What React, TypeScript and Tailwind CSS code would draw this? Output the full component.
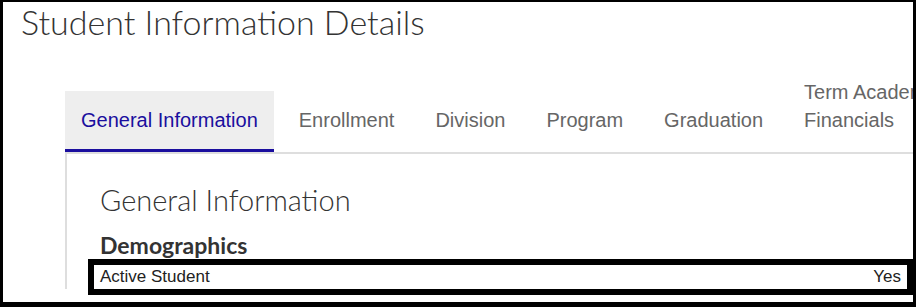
const TABS = ["General Information", "Enrollment", "Division", "Program", "Graduation", "Term Academic Financials"];

export default function App() {
  return (
    <div className="w-[916px] h-[307px] bg-white border-l-[3px] border-t-[2px] border-r-[3px] border-b-[5px] border-black overflow-hidden flex flex-col">
      <h1 className="h-[60px] pl-[18px] font-['Lato','Open_Sans',sans-serif] text-[34px] leading-[40px] font-light text-[#333]">
        Student Information Details
      </h1>

      {/* tabs */}
      <div className="ml-[62px] h-[92px] flex items-end gap-[9px] border-b-2 border-[#dedede] font-['Liberation_Sans',Arial,sans-serif] text-[20px] leading-[28px]">
        {TABS.map((t, i) => (
          <div
            key={t}
            className={`shrink-0 px-[16px] py-[15px] border-b-[3px] ${
              i === 0 ? "bg-[#eeeeee] text-[#1a0e9e] border-[#1a0e9e]" : "text-[#666] border-transparent"
            } ${i === TABS.length - 1 ? "w-[180px]" : ""}`}
          >
            {t}
          </div>
        ))}
      </div>

      <div className="ml-[62px] h-[135px] border-l-2 border-[#dedede] flex flex-col">
        <h2 className="pl-[33px] pt-[30px] font-['Lato','Open_Sans',sans-serif] text-[29px] leading-[32px] font-light text-[#333]">
          General Information
        </h2>
        <h3 className="pl-[33px] pt-[16px] font-['Lato','Open_Sans',sans-serif] text-[23px] leading-[26px] font-bold text-[#333]">
          Demographics
        </h3>
        <div className="mt-auto ml-[27px] mr-[6px] h-[24px] flex items-center justify-between px-[6px] font-['Liberation_Sans',Arial,sans-serif] text-[17px] text-[#222] outline-[6px] outline-black">
          <span>Active Student</span>
          <span>Yes</span>
        </div>
      </div>
    </div>
  );
}
